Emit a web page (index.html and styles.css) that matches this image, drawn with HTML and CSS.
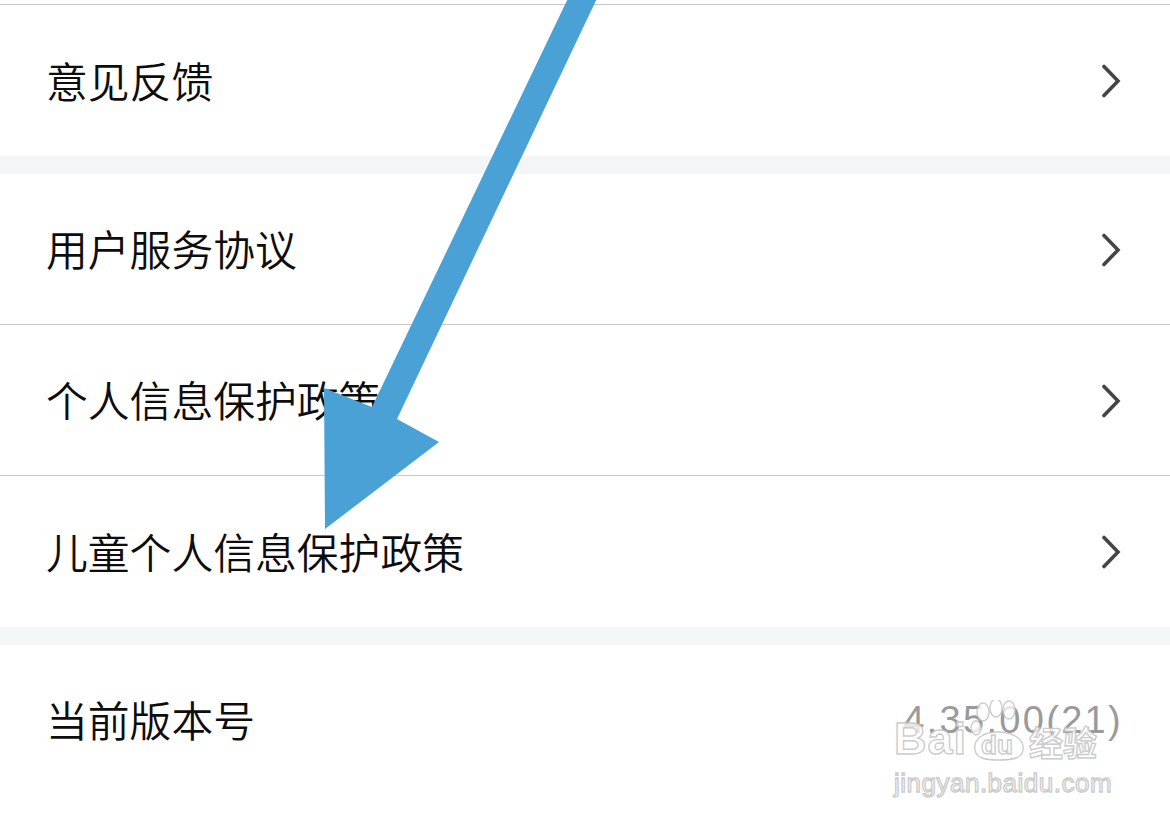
FILE: index.html
```html
<!DOCTYPE html>
<html lang="zh-CN">
<head>
<meta charset="utf-8">
<title>设置</title>
<link rel="stylesheet" href="styles.css">
</head>
<body>
<div class="page">
  <div class="top-strip"></div>
  <div class="group">
    <div class="row row-tall"><span class="label">意见反馈</span><svg class="chev" viewBox="0 0 20 34" width="20" height="34"><path d="M3 2.5 L17 17 L3 31.5" /></svg></div>
  </div>
  <div class="gap"></div>
  <div class="group">
    <div class="row sep"><span class="label">用户服务协议</span><svg class="chev" viewBox="0 0 20 34" width="20" height="34"><path d="M3 2.5 L17 17 L3 31.5" /></svg></div>
    <div class="row sep"><span class="label">个人信息保护政策</span><svg class="chev" viewBox="0 0 20 34" width="20" height="34"><path d="M3 2.5 L17 17 L3 31.5" /></svg></div>
    <div class="row row-tall"><span class="label">儿童个人信息保护政策</span><svg class="chev" viewBox="0 0 20 34" width="20" height="34"><path d="M3 2.5 L17 17 L3 31.5" /></svg></div>
  </div>
  <div class="gap"></div>
  <div class="group">
    <div class="row"><span class="label">当前版本号</span><span class="value">4.35.00(21)</span></div>
  </div>

  <svg class="arrow" viewBox="0 0 1170 822" width="1170" height="822">
    <polygon points="572,-10 601,-10 397,419 439,442 325,529 324,388 372,407" />
  </svg>

  <div class="watermark">
    <div class="wm-line">
      <span class="wm-bai">Bai</span>
      <span class="wm-paw">
        <svg viewBox="0 0 60 62" width="60" height="62">
          <ellipse cx="14" cy="12" rx="6" ry="9" />
          <ellipse cx="27" cy="8" rx="6" ry="9" />
          <ellipse cx="40" cy="10" rx="6" ry="9" />
          <ellipse cx="7" cy="28" rx="5" ry="7" />
          <path d="M6 50 C4 38 16 32 28 32 C42 32 56 38 54 50 C53 58 44 60 30 60 C16 60 7 58 6 50 Z" />
        </svg>
        <span class="wm-du">du</span>
      </span>
      <span class="wm-cn">经验</span>
    </div>
    <div class="wm-url">jingyan.baidu.com</div>
  </div>
</div>
</body>
</html>
```

FILE: styles.css
```css
html, body {
  margin: 0;
  padding: 0;
  background: #ffffff;
}

.page {
  position: relative;
  width: 1170px;
  height: 822px;
  overflow: hidden;
  background: #ffffff;
  font-family: "Noto Sans CJK SC", "Noto Sans", sans-serif;
}

.top-strip {
  height: 4px;
  border-bottom: 1px solid #c8c8c8;
}

.group {
  background: #ffffff;
}

.gap {
  height: 18px;
  background: #f4f5f7;
}

.row {
  height: 150px;
  display: flex;
  align-items: center;
  justify-content: space-between;
  padding: 0 49px 0 46px;
  box-sizing: border-box;
}

.row.sep {
  height: 151px;
  border-bottom: 1px solid #c8c8c8;
}

.row.row-tall {
  height: 151px;
}

.label {
  font-size: 41.8px;
  font-weight: 350;
  line-height: 1;
  color: #0d0d0d;
}

.chev {
  display: block;
  margin-top: 1px;
}

.chev path {
  fill: none;
  stroke: #454545;
  stroke-width: 3.6;
  stroke-linecap: round;
  stroke-linejoin: miter;
}

.value {
  font-family: "Liberation Sans", Arial, sans-serif;
  font-size: 38px;
  letter-spacing: 2.3px;
  color: #9a9a9a;
  margin-right: -2px;
}

.arrow {
  position: absolute;
  left: 0;
  top: 0;
  pointer-events: none;
}

.arrow polygon {
  fill: #49a1d6;
}

.watermark {
  position: absolute;
  left: 894px;
  top: 700px;
  width: 220px;
  color: rgba(255, 255, 255, 0.75);
  font-family: "Liberation Sans", Arial, sans-serif;
  -webkit-text-stroke: 1.4px rgba(190, 190, 190, 0.8);
}

.wm-line {
  display: flex;
  align-items: flex-end;
  height: 62px;
}

.wm-bai {
  font-size: 45px;
  font-weight: bold;
  line-height: 1;
  letter-spacing: 1px;
  padding-bottom: 1px;
}

.wm-paw {
  position: relative;
  width: 58px;
  height: 62px;
  margin-left: 2px;
}

.wm-paw svg {
  display: block;
}

.wm-paw svg ellipse,
.wm-paw svg path {
  fill: rgba(255, 255, 255, 0.75);
  stroke: rgba(190, 190, 190, 0.8);
  stroke-width: 1.4;
}

.wm-du {
  position: absolute;
  left: 12px;
  bottom: 4px;
  font-size: 26px;
  font-weight: bold;
  line-height: 1;
}

.wm-cn {
  font-family: "Noto Sans CJK SC", sans-serif;
  font-size: 34px;
  font-weight: bold;
  line-height: 1;
  margin-left: 2px;
  padding-bottom: 3px;
}

.wm-url {
  font-size: 26px;
  line-height: 1;
  margin-top: 8px;
  letter-spacing: 0.5px;
}
```
